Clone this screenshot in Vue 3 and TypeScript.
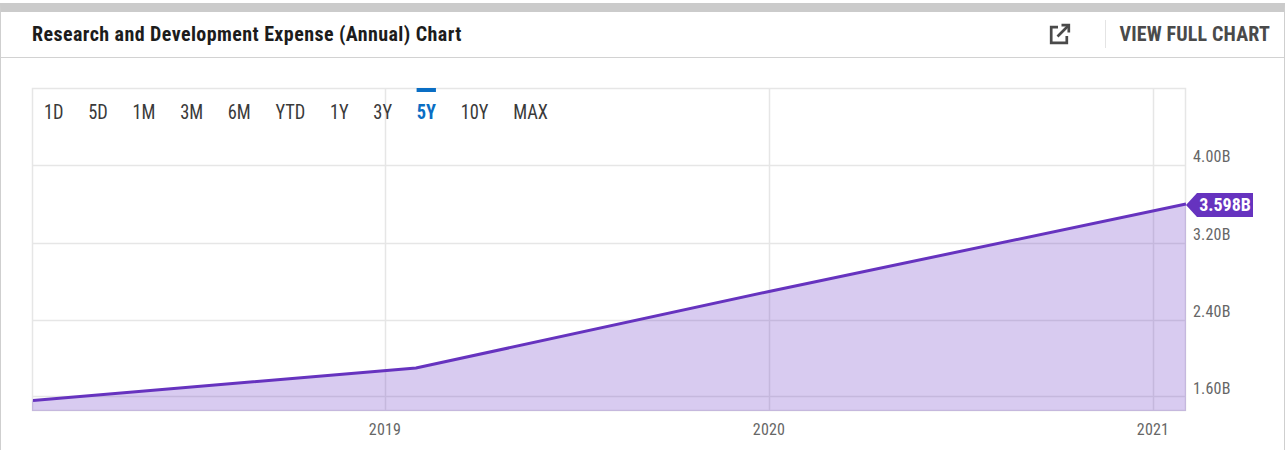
<script setup lang="ts">
const ranges: string[] = ['1D', '5D', '1M', '3M', '6M', 'YTD', '1Y', '3Y', '5Y', '10Y', 'MAX']
const active = '5Y'
const hLines: number[] = [165, 243, 320, 396]
const vLines: number[] = [385, 769, 1153]
const yLabels = [
  { t: '4.00B', y: 162 },
  { t: '3.20B', y: 240 },
  { t: '2.40B', y: 317 },
  { t: '1.60B', y: 394 },
]
const xLabels = [
  { t: '2019', x: 385 },
  { t: '2020', x: 769 },
  { t: '2021', x: 1153 },
]
</script>

<template>
  <div class="page">
    <section class="card">
      <header class="head">
        <h2 class="title">Research and Development Expense (Annual) Chart</h2>
        <div class="actions">
          <svg class="ext" width="22" height="22" viewBox="0 0 22 22" fill="none" stroke="#4a4a4a" stroke-width="2.7">
            <path d="M9 4.2H2.2V19.8H17.8V13" />
            <path d="M8.5 13.5L19.5 2.5" />
            <path d="M12.5 2.2H19.8V9.5" />
          </svg>
          <span class="sep"></span>
          <a class="full">VIEW FULL CHART</a>
        </div>
      </header>
      <div class="chart">
        <svg class="plot" width="1283" height="392" viewBox="1 58 1283 392">
          <rect x="32.5" y="88.5" width="1153" height="322" fill="#fff" stroke="#e6e6e6" stroke-width="1.5" />
          <line v-for="y in hLines" :key="y" x1="33" x2="1186" :y1="y + 0.5" :y2="y + 0.5" stroke="#e6e6e6" stroke-width="1.5" />
          <line v-for="x in vLines" :key="x" :x1="x + 0.5" :x2="x + 0.5" y1="89" y2="411" stroke="#e6e6e6" stroke-width="1.5" />
          <polygon points="32,400.5 416,368 769,291.5 1186,204 1186,411 32,411" fill="#6a35c4" fill-opacity="0.26" />
          <polyline points="33,400.5 416,368 769,291.5 1186,204" fill="none" stroke="#6633bf" stroke-width="3" />
          <text v-for="l in yLabels" :key="l.t" class="axis" x="1193" :y="l.y">{{ l.t }}</text>
          <text v-for="l in xLabels" :key="l.t" class="axis" text-anchor="middle" :x="l.x" y="435">{{ l.t }}</text>
          <polygon points="1186,205 1197,193 1253,193 1253,217 1197,217" fill="#6633bf" />
          <text class="tag" x="1225" y="211" text-anchor="middle">3.598B</text>
        </svg>
        <nav class="ranges">
          <span v-for="r in ranges" :key="r" class="range" :class="{ on: r === active }">{{ r }}</span>
        </nav>
      </div>
    </section>
  </div>
</template>

<style scoped>
.page {
  width: 1288px;
  height: 450px;
  padding-top: 3px;
  box-sizing: border-box;
  background: #fff;
  overflow: hidden;
  font-family: Roboto, "Liberation Sans", sans-serif;
}
.card {
  width: 1285px;
  height: 447px;
  box-sizing: border-box;
  border-top: 9px solid #cbcbcb;
  border-left: 1px solid #cfcfcf;
  border-right: 1px solid #cfcfcf;
}
.head {
  height: 46px;
  box-sizing: border-box;
  border-bottom: 1px solid #d2d2d2;
  display: flex;
  align-items: center;
  justify-content: space-between;
  padding: 0 14px 2px 31px;
}
.title {
  margin: 0;
  font-size: 20px;
  font-weight: 700;
  color: #1c1c1c;
  font-stretch: condensed;
  letter-spacing: 0.42px;
  white-space: nowrap;
}
.actions {
  display: flex;
  align-items: center;
}
.ext {
  margin: 1px 34px 0 0;
}
.sep {
  width: 1px;
  height: 28px;
  background: #e4e4e4;
  margin-right: 13px;
}
.full {
  font-size: 20px;
  font-weight: 700;
  color: #4a4a4a;
  letter-spacing: 0.15px;
  font-stretch: condensed;
  white-space: nowrap;
}
.chart {
  position: relative;
  height: 392px;
}
.plot {
  display: block;
}
.axis {
  font-family: Roboto, sans-serif;
  font-size: 16px;
  letter-spacing: 0.2px;
  fill: #666;
  font-stretch: condensed;
}
.tag {
  font-family: Roboto, sans-serif;
  font-size: 18px;
  font-weight: 700;
  fill: #fff;
  font-stretch: condensed;
}
.ranges {
  position: absolute;
  left: 43px;
  top: 30px;
  display: flex;
  gap: 26.8px;
  transform: scaleX(0.92);
  transform-origin: left top;
}
.range {
  font-size: 20px;
  line-height: 21px;
  padding: 10px 0 0;
  color: #3a3a3a;
  border-top: 4px solid transparent;
  font-stretch: condensed;
  white-space: nowrap;
}
.range.on {
  color: #0a6ec4;
  font-weight: 700;
  border-top-color: #0a6ec4;
}
</style>
